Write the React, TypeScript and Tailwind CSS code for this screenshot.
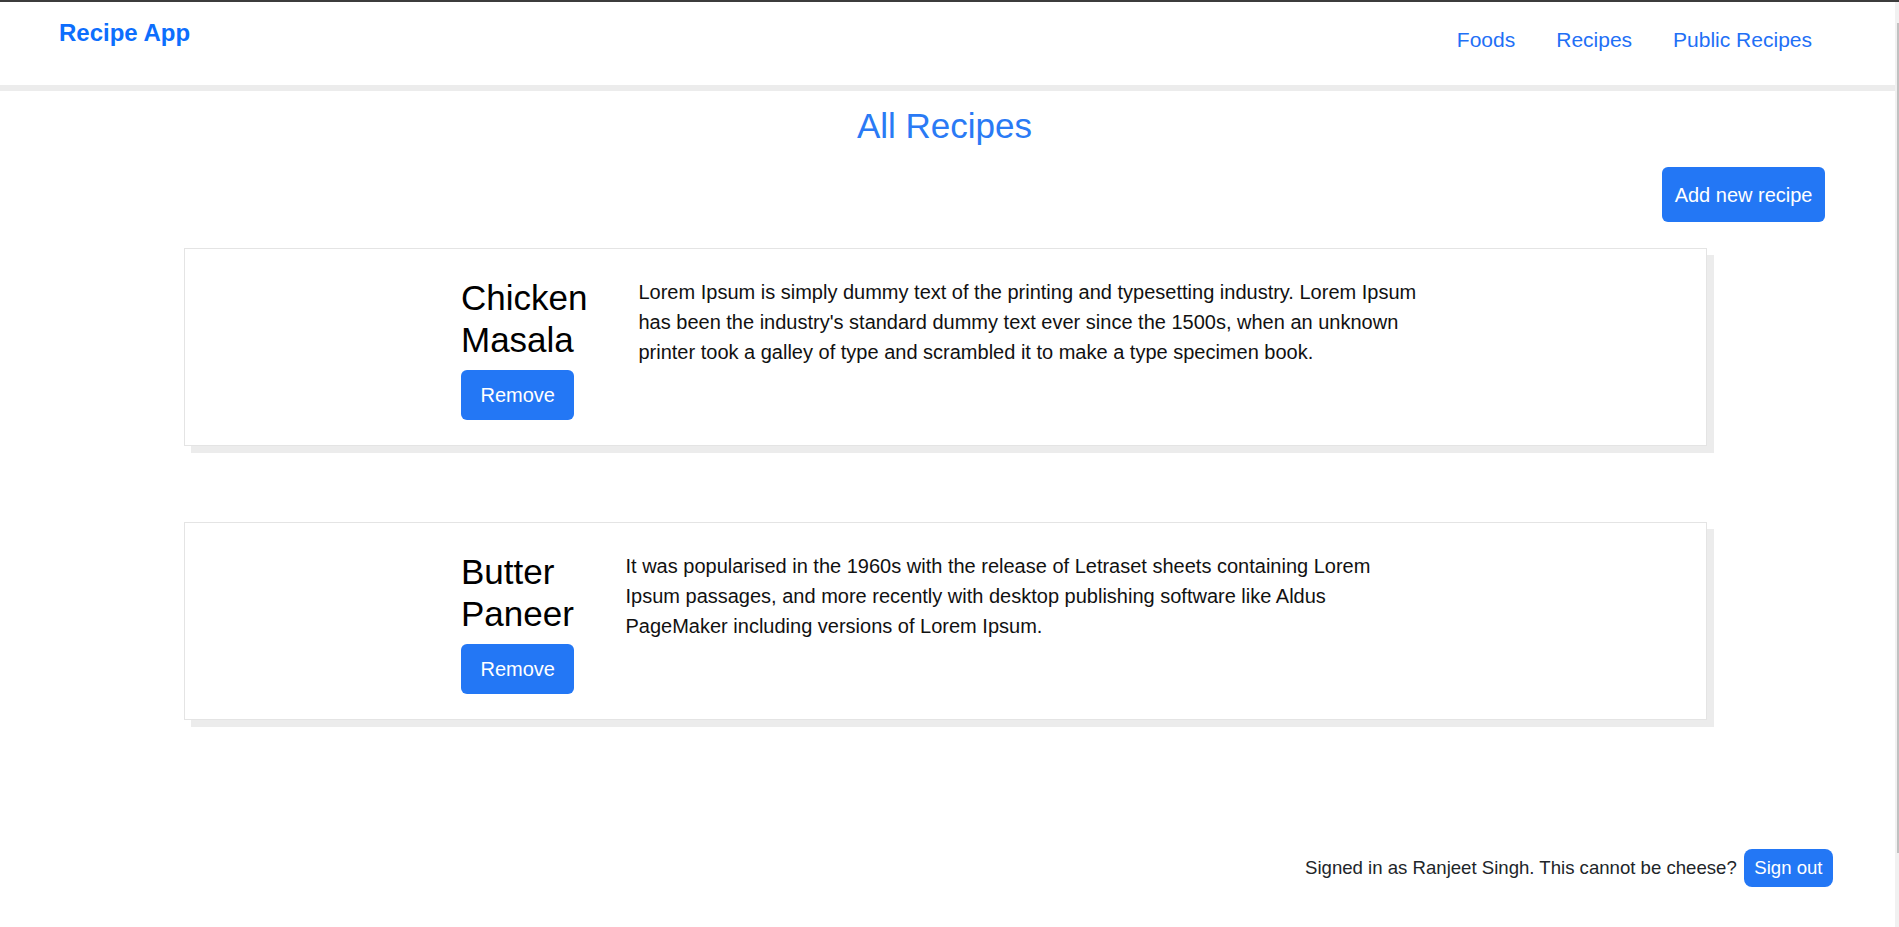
type Recipe = {
  id: number;
  name: string;
  description: string;
};

const recipes: Recipe[] = [
  {
    id: 1,
    name: "Chicken Masala",
    description:
      "Lorem Ipsum is simply dummy text of the printing and typesetting industry. Lorem Ipsum has been the industry's standard dummy text ever since the 1500s, when an unknown printer took a galley of type and scrambled it to make a type specimen book.",
  },
  {
    id: 2,
    name: "Butter Paneer",
    description:
      "It was popularised in the 1960s with the release of Letraset sheets containing Lorem Ipsum passages, and more recently with desktop publishing software like Aldus PageMaker including versions of Lorem Ipsum.",
  },
];

function Navbar() {
  return (
    <nav className="flex justify-between items-start h-[89px] border-b-[6px] border-[#ececec] bg-white">
      <a className="pl-[59px] pt-[13px] text-[24px] leading-[36px] font-bold text-[#0d6efd]">Recipe App</a>
      <div className="flex gap-[41px] pt-[22px] pr-[83px] text-[21px] leading-[31px] text-[#1f70f6]">
        <a>Foods</a>
        <a>Recipes</a>
        <a>Public Recipes</a>
      </div>
    </nav>
  );
}

function RecipeCard({ recipe }: { recipe: Recipe }) {
  return (
    <div className="ml-[184px] w-[1523px] h-[198px] border border-[#e4e4e4] bg-white shadow-[7px_7px_0_#ececec] pt-[28px] pl-[276px] flex items-start">
      {/* title + remove */}
      <div className="w-min">
        <h2 className="text-[35px] leading-[42px] text-black">{recipe.name}</h2>
        <button className="mt-[9px] h-[50px] px-[19.5px] rounded-[6px] bg-[#2377f5] text-white text-[20px] whitespace-nowrap">
          Remove
        </button>
      </div>
      <p className="ml-[51px] w-[782px] text-[20px] leading-[30px] text-[#111]">{recipe.description}</p>
    </div>
  );
}

export default function App() {
  return (
    <div className="flex flex-col h-[927px] overflow-hidden bg-white" style={{ fontFamily: '"Liberation Sans", Arial, sans-serif' }}>
      <div className="h-[2px] bg-[#3c3c3c]" />
      <div className="flex flex-1">
        <main className="flex-1 flex flex-col">
          <Navbar />

          <h1 className="mt-[14px] pr-[6px] text-center text-[35px] leading-[42px] text-[#2a7af5]">All Recipes</h1>

          <div className="mt-[20px] flex justify-end pr-[70px]">
            <button className="h-[55px] px-[12.5px] rounded-[6px] bg-[#2377f5] text-white text-[20px]">Add new recipe</button>
          </div>

          <div className="mt-[26px] flex flex-col gap-[76px]">
            {recipes.map((r) => (
              <RecipeCard key={r.id} recipe={r} />
            ))}
          </div>

          <footer className="mt-auto mb-[40px] flex justify-end items-center pr-[62px] text-[18.6px] text-[#212529]">
            <span>Signed in as Ranjeet Singh. This cannot be cheese?</span>
            <button className="ml-[7px] h-[38px] px-[10.5px] rounded-[8px] bg-[#2377f5] text-white">Sign out</button>
          </footer>
        </main>

        {/* scrollbar */}
        <div className="w-[4px] bg-[#f1f1f1] pl-[2px] pt-[21px]">
          <div className="w-[2px] h-[830px] bg-[#c1c1c1]" />
        </div>
      </div>
    </div>
  );
}
